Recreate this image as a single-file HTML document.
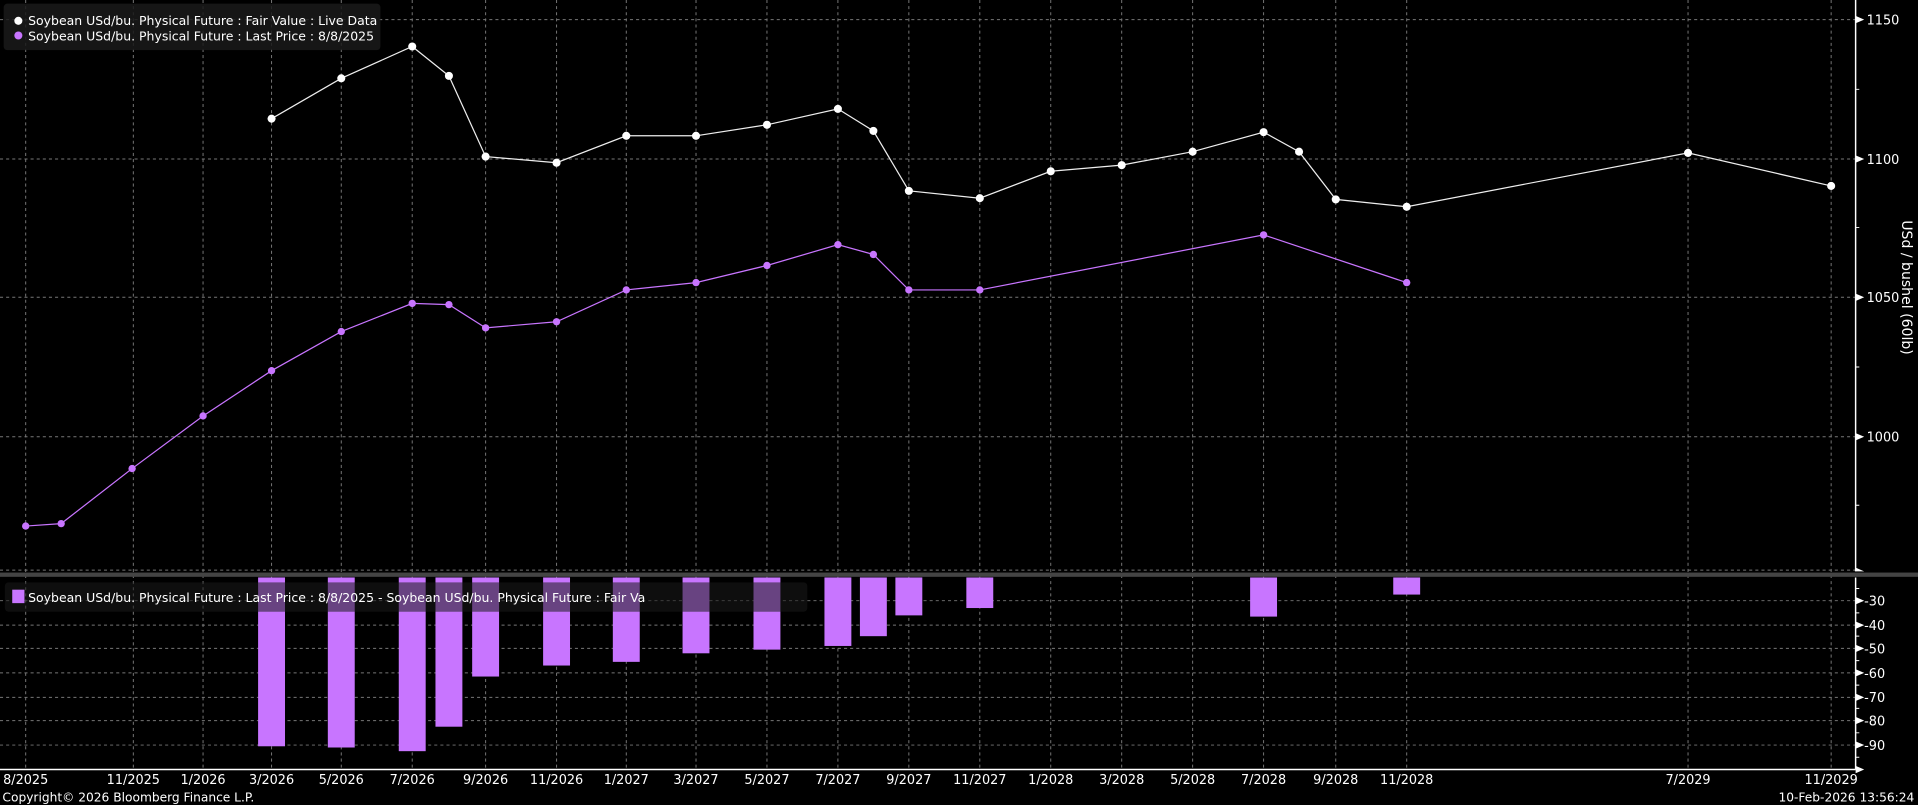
<!DOCTYPE html>
<html><head><meta charset="utf-8"><style>
html,body{margin:0;padding:0;background:#000;width:1918px;height:805px;overflow:hidden}
svg{display:block}
text{font-family:"DejaVu Sans","Liberation Sans",sans-serif;fill:#fff}
</style></head><body>
<svg width="1918" height="805" viewBox="0 0 1568 658" preserveAspectRatio="none">
<g stroke="#777" stroke-width="0.8" stroke-dasharray="2.5,2.5" fill="none">
<path d="M21 0V629M109 0V629M166 0V629M222 0V629M279 0V629M337 0V629M397 0V629M455 0V629M512 0V629M569 0V629M627 0V629M685 0V629M743 0V629M801 0V629M859 0V629M917 0V629M975 0V629M1033 0V629M1092 0V629M1150 0V629M1380 0V629M1497 0V629"/>
<path d="M0 16H1517M0 130H1517M0 243H1517M0 357H1517"/>
<path d="M0 491H1517M0 511H1517M0 530H1517M0 550H1517M0 570H1517M0 589H1517M0 609H1517"/>
<path d="M0 466H1517"/>
</g>
<rect x="0" y="468" width="1568" height="3.5" fill="#444"/>
<g fill="#c875ff">
<rect x="211" y="472" width="22" height="138"/>
<rect x="268" y="472" width="22" height="139"/>
<rect x="326" y="472" width="22" height="142"/>
<rect x="356" y="472" width="22" height="122"/>
<rect x="386" y="472" width="22" height="81"/>
<rect x="444" y="472" width="22" height="72"/>
<rect x="501" y="472" width="22" height="69"/>
<rect x="558" y="472" width="22" height="62"/>
<rect x="616" y="472" width="22" height="59"/>
<rect x="674" y="472" width="22" height="56"/>
<rect x="703" y="472" width="22" height="48"/>
<rect x="732" y="472" width="22" height="31"/>
<rect x="790" y="472" width="22" height="25"/>
<rect x="1022" y="472" width="22" height="32"/>
<rect x="1139" y="472" width="22" height="14"/>
</g>
<rect x="4" y="476" width="656" height="24" rx="3" fill="#1a1a1a" fill-opacity="0.55"/>
<rect x="10" y="482" width="10" height="11" fill="#c875ff"/>
<text x="23" y="492" font-size="10.2">Soybean USd/bu. Physical Future : Last Price : 8/8/2025 - Soybean USd/bu. Physical Future : Fair Va</text>
<polyline fill="none" stroke="#c875ff" stroke-width="1" points="21,430 50,428 108,383 166,340 222,303 279,271 337,248 367,249 397,268 455,263 512,237 569,231 627,217 685,200 714,208 743,237 801,237 1033,192 1150,231"/>
<g fill="#c875ff">
<circle cx="21" cy="430" r="3"/><circle cx="50" cy="428" r="3"/><circle cx="108" cy="383" r="3"/><circle cx="166" cy="340" r="3"/><circle cx="222" cy="303" r="3"/><circle cx="279" cy="271" r="3"/><circle cx="337" cy="248" r="3"/><circle cx="367" cy="249" r="3"/><circle cx="397" cy="268" r="3"/><circle cx="455" cy="263" r="3"/><circle cx="512" cy="237" r="3"/><circle cx="569" cy="231" r="3"/><circle cx="627" cy="217" r="3"/><circle cx="685" cy="200" r="3"/><circle cx="714" cy="208" r="3"/><circle cx="743" cy="237" r="3"/><circle cx="801" cy="237" r="3"/><circle cx="1033" cy="192" r="3"/><circle cx="1150" cy="231" r="3"/>
</g>
<polyline fill="none" stroke="#eee" stroke-width="1" points="222,97 279,64 337,38 367,62 397,128 455,133 512,111 569,111 627,102 685,89 714,107 743,156 801,162 859,140 917,135 975,124 1033,108 1062,124 1092,163 1150,169 1380,125 1497,152"/>
<g fill="#fff">
<circle cx="222" cy="97" r="3.3"/><circle cx="279" cy="64" r="3.3"/><circle cx="337" cy="38" r="3.3"/><circle cx="367" cy="62" r="3.3"/><circle cx="397" cy="128" r="3.3"/><circle cx="455" cy="133" r="3.3"/><circle cx="512" cy="111" r="3.3"/><circle cx="569" cy="111" r="3.3"/><circle cx="627" cy="102" r="3.3"/><circle cx="685" cy="89" r="3.3"/><circle cx="714" cy="107" r="3.3"/><circle cx="743" cy="156" r="3.3"/><circle cx="801" cy="162" r="3.3"/><circle cx="859" cy="140" r="3.3"/><circle cx="917" cy="135" r="3.3"/><circle cx="975" cy="124" r="3.3"/><circle cx="1033" cy="108" r="3.3"/><circle cx="1062" cy="124" r="3.3"/><circle cx="1092" cy="163" r="3.3"/><circle cx="1150" cy="169" r="3.3"/><circle cx="1380" cy="125" r="3.3"/><circle cx="1497" cy="152" r="3.3"/>
</g>
<rect x="3" y="3" width="308" height="38" rx="3" fill="#1a1a1a" fill-opacity="0.85"/>
<circle cx="15" cy="17" r="3.3" fill="#fff"/>
<circle cx="15" cy="29" r="3.3" fill="#c875ff"/>
<text x="23" y="20.5" font-size="10.2">Soybean USd/bu. Physical Future : Fair Value : Live Data</text>
<text x="23" y="33" font-size="10.2">Soybean USd/bu. Physical Future : Last Price : 8/8/2025</text>
<path d="M1517 0V467M1517 472V629M0 629H1517" stroke="#fff" stroke-width="1.2" fill="none"/>
<g fill="#fff">
<path d="M1517 13l7 3-7 3zM1517 127l7 3-7 3zM1517 240l7 3-7 3zM1517 354l7 3-7 3zM1517 464l7 3-7 0z"/>
<path d="M1517 488l7 3-7 3zM1517 508l7 3-7 3zM1517 527l7 3-7 3zM1517 547l7 3-7 3zM1517 567l7 3-7 3zM1517 586l7 3-7 3zM1517 606l7 3-7 3zM1517 626l7 3-7 3z"/>
</g>
<path d="M1517 73h3M1517 186h3M1517 300h3M1517 413h3M1517 481h3M1517 501h3M1517 520h3M1517 540h3M1517 560h3M1517 579h3M1517 599h3M1517 619h3" stroke="#fff" stroke-width="0.8"/>
<g font-size="10.5">
<text x="1526" y="20">1150</text><text x="1526" y="134">1100</text><text x="1526" y="247">1050</text><text x="1526" y="361">1000</text>
<text x="1524" y="495">-30</text><text x="1524" y="515">-40</text><text x="1524" y="534">-50</text><text x="1524" y="554">-60</text><text x="1524" y="574">-70</text><text x="1524" y="593">-80</text><text x="1524" y="613">-90</text>
</g>
<text transform="translate(1555,235) rotate(90)" font-size="11.5" text-anchor="middle" fill="#ddd">USd / bushel (60lb)</text>
<g font-size="10.5" text-anchor="middle">
<text x="21" y="641">8/2025</text><text x="109" y="641">11/2025</text><text x="166" y="641">1/2026</text><text x="222" y="641">3/2026</text><text x="279" y="641">5/2026</text><text x="337" y="641">7/2026</text><text x="397" y="641">9/2026</text><text x="455" y="641">11/2026</text><text x="512" y="641">1/2027</text><text x="569" y="641">3/2027</text><text x="627" y="641">5/2027</text><text x="685" y="641">7/2027</text><text x="743" y="641">9/2027</text><text x="801" y="641">11/2027</text><text x="859" y="641">1/2028</text><text x="917" y="641">3/2028</text><text x="975" y="641">5/2028</text><text x="1033" y="641">7/2028</text><text x="1092" y="641">9/2028</text><text x="1150" y="641">11/2028</text><text x="1380" y="641">7/2029</text><text x="1497" y="641">11/2029</text>
</g>
<text x="2" y="655" font-size="10">Copyright© 2026 Bloomberg Finance L.P.</text>
<text x="1565" y="655" font-size="10" text-anchor="end">10-Feb-2026 13:56:24</text>
</svg>
</body></html>
